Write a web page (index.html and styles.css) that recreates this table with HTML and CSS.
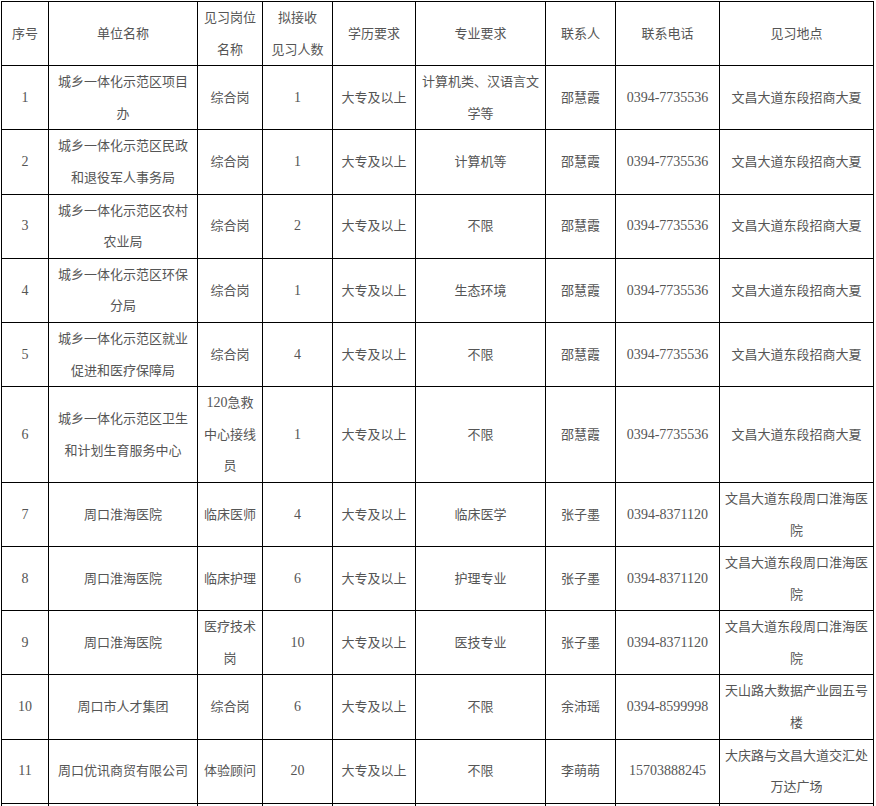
FILE: index.html
```html
<!DOCTYPE html>
<html lang="zh-CN">
<head>
<meta charset="utf-8">
<title>见习岗位</title>
<link rel="stylesheet" href="styles.css">
</head>
<body>
<div class="wrap">
<table class="jobs">
<colgroup>
<col class="c1"><col class="c2"><col class="c3"><col class="c4"><col class="c5"><col class="c6"><col class="c7"><col class="c8"><col class="c9">
</colgroup>
<tbody>
<tr><td>序号</td><td>单位名称</td><td>见习岗位<br>名称</td><td>拟接收<br>见习人数</td><td>学历要求</td><td>专业要求</td><td>联系人</td><td>联系电话</td><td>见习地点</td></tr>
<tr><td class="n">1</td><td>城乡一体化示范区项目<br>办</td><td>综合岗</td><td class="n">1</td><td>大专及以上</td><td>计算机类、汉语言文<br>学等</td><td>邵慧霞</td><td class="n">0394-7735536</td><td>文昌大道东段招商大夏</td></tr>
<tr><td class="n">2</td><td>城乡一体化示范区民政<br>和退役军人事务局</td><td>综合岗</td><td class="n">1</td><td>大专及以上</td><td>计算机等</td><td>邵慧霞</td><td class="n">0394-7735536</td><td>文昌大道东段招商大夏</td></tr>
<tr><td class="n">3</td><td>城乡一体化示范区农村<br>农业局</td><td>综合岗</td><td class="n">2</td><td>大专及以上</td><td>不限</td><td>邵慧霞</td><td class="n">0394-7735536</td><td>文昌大道东段招商大夏</td></tr>
<tr><td class="n">4</td><td>城乡一体化示范区环保<br>分局</td><td>综合岗</td><td class="n">1</td><td>大专及以上</td><td>生态环境</td><td>邵慧霞</td><td class="n">0394-7735536</td><td>文昌大道东段招商大夏</td></tr>
<tr><td class="n">5</td><td>城乡一体化示范区就业<br>促进和医疗保障局</td><td>综合岗</td><td class="n">4</td><td>大专及以上</td><td>不限</td><td>邵慧霞</td><td class="n">0394-7735536</td><td>文昌大道东段招商大夏</td></tr>
<tr><td class="n">6</td><td>城乡一体化示范区卫生<br>和计划生育服务中心</td><td><span class="num">120</span>急救<br>中心接线<br>员</td><td class="n">1</td><td>大专及以上</td><td>不限</td><td>邵慧霞</td><td class="n">0394-7735536</td><td>文昌大道东段招商大夏</td></tr>
<tr><td class="n">7</td><td>周口淮海医院</td><td>临床医师</td><td class="n">4</td><td>大专及以上</td><td>临床医学</td><td>张子墨</td><td class="n">0394-8371120</td><td>文昌大道东段周口淮海医<br>院</td></tr>
<tr><td class="n">8</td><td>周口淮海医院</td><td>临床护理</td><td class="n">6</td><td>大专及以上</td><td>护理专业</td><td>张子墨</td><td class="n">0394-8371120</td><td>文昌大道东段周口淮海医<br>院</td></tr>
<tr><td class="n">9</td><td>周口淮海医院</td><td>医疗技术<br>岗</td><td class="n">10</td><td>大专及以上</td><td>医技专业</td><td>张子墨</td><td class="n">0394-8371120</td><td>文昌大道东段周口淮海医<br>院</td></tr>
<tr><td class="n">10</td><td>周口市人才集团</td><td>综合岗</td><td class="n">6</td><td>大专及以上</td><td>不限</td><td>余沛瑶</td><td class="n">0394-8599998</td><td>天山路大数据产业园五号<br>楼</td></tr>
<tr><td class="n">11</td><td>周口优讯商贸有限公司</td><td>体验顾问</td><td class="n">20</td><td>大专及以上</td><td>不限</td><td>李萌萌</td><td class="n">15703888245</td><td>大庆路与文昌大道交汇处<br>万达广场</td></tr>
<tr class="tail"><td></td><td></td><td></td><td></td><td></td><td></td><td></td><td></td><td></td></tr>
</tbody>
</table>
</div>
</body>
</html>
```
FILE: styles.css
```css
html, body {
  margin: 0;
  padding: 0;
  background: #ffffff;
}
.wrap {
  padding: 1px 0 0 1px;
}
.jobs {
  border-collapse: collapse;
  table-layout: fixed;
  width: 872px;
  font-family: "Liberation Serif", "Noto Sans CJK SC", serif;
  font-size: 13px;
  color: #555555;
}
.jobs td {
  border: 1px solid #000000;
  padding: 0 4px;
  line-height: 31.6px;
  text-align: center;
  vertical-align: middle;
  white-space: nowrap;
}
.jobs td.n,
.jobs .num {
  font-size: 14px;
}
.jobs .tail td {
  height: 63px;
}
.c1 { width: 47px; }
.c2 { width: 149px; }
.c3 { width: 65px; }
.c4 { width: 70px; }
.c5 { width: 83px; }
.c6 { width: 130px; }
.c7 { width: 70px; }
.c8 { width: 104px; }
.c9 { width: 154px; }
```
